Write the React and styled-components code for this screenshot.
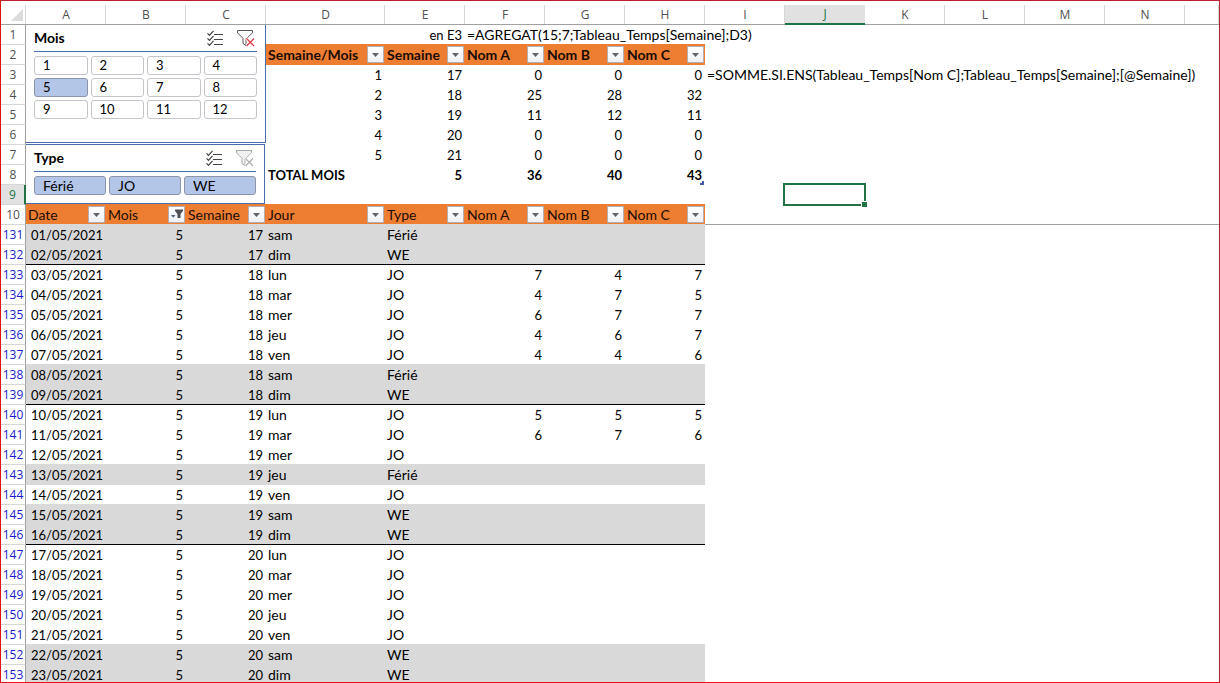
import React, { useState } from "react";
import styled, { createGlobalStyle, css } from "styled-components";

const cellFont = 'Lato, Carlito, "Liberation Sans", sans-serif';
const headingFont = '"Open Sans", "Noto Sans", sans-serif';
const color = {
  orange: "#ed7d31",
  band: "#d9d9d9",
  green: "#217346",
  line: "#a0a0a0",
  grid: "#d6d6d6",
  slicer: "#4a6ea9",
  picked: "#b4c6e7",
};

const GlobalStyle = createGlobalStyle`
  *, *::before, *::after { box-sizing: border-box; }
  body { margin: 0; background: #fff; }
`;

const Window = styled.main`
  height: 100vh;
  overflow: hidden;
  border: 1px solid #e01212;
  border-top-color: #bb2030;
  border-right-color: #bb2030;
  background: #fff;
  color: #000;
  font: 14px/18px ${cellFont};
`;

const Sheet = styled.table`
  width: 100%;
  table-layout: fixed;
  border-collapse: separate;
  border-spacing: 0;
`;

const Col = styled.col`
  width: ${(p) => (p.$w ? `${p.$w}px` : "auto")};
`;

const Row = styled.tr`
  height: 20px;
`;

const ColumnRow = styled.tr`
  height: 24px;
`;

const ColumnHead = styled.th`
  padding: 4px 0 0;
  border-bottom: 1px solid ${color.line};
  background: linear-gradient(${color.grid}, ${color.grid}) right bottom / 1px 19px no-repeat;
  font: 12px/18px ${headingFont};
  color: #505050;
  text-align: center;
  ${(p) =>
    p.$active &&
    css`
      background: linear-gradient(#fff 4px, #e1e1e1 4px);
      border-bottom: 2px solid ${color.green};
      color: ${color.green};
    `}
`;

const Corner = styled.th`
  padding: 4px 3px 0 0;
  border-bottom: 1px solid ${color.line};
  background: linear-gradient(${color.grid}, ${color.grid}) right bottom / 1px 19px no-repeat;
  text-align: right;
  line-height: 0;
`;

const RowHead = styled.th`
  padding: 1px 0 0;
  border-right: 1px solid ${color.line};
  border-bottom: 1px solid ${color.grid};
  font: 12px/18px ${headingFont};
  color: ${(p) => (p.$filtered ? "#1a1acc" : "#505050")};
  text-align: center;
  vertical-align: top;
  ${(p) =>
    p.$active &&
    css`
      background: #e1e1e1;
      border-right: 2px solid ${color.green};
      color: ${color.green};
    `}
`;

const Cell = styled.td`
  position: relative;
  padding: 1px 2px 0;
  text-align: ${(p) => (p.$num ? "right" : "left")};
  font-size: ${(p) => (p.$num || p.$bold ? 13 : 14)}px;
  font-weight: ${(p) => (p.$bold ? 700 : 400)};
  vertical-align: top;
  white-space: nowrap;
  ${(p) =>
    p.$num &&
    css`
      padding-right: 3px;
    `}
  ${(p) =>
    p.$band &&
    css`
      background: ${color.band};
      box-shadow: 0 -1px 0 ${color.band};
    `}
  ${(p) =>
    p.$weekEnd &&
    css`
      border-bottom: 1px solid #000;
    `}
`;

const FreezeCell = styled.td`
  padding: 0;
  border-bottom: 1px solid ${color.line};
`;

const FieldHead = styled.th`
  padding: 1px 1px 0 2px;
  background: ${color.orange};
  box-shadow: 0 -1px 0 ${color.orange};
  font-weight: ${(p) => (p.$bold ? 700 : 400)};
  color: #1c0d04;
  text-align: left;
  vertical-align: top;
  ${(p) =>
    p.$freeze &&
    css`
      border-bottom: 1px solid ${color.line};
    `}
`;

const FieldLine = styled.div`
  display: flex;
  align-items: flex-start;
  justify-content: space-between;
  height: 18px;
  white-space: nowrap;
`;

const FilterButton = styled.button`
  display: flex;
  flex: none;
  width: 17px;
  height: 17px;
  padding: 0;
  border: 1px solid #b5aeb0;
  background: linear-gradient(#fff, #eef1f6);
`;

const ActiveCell = styled.div`
  position: absolute;
  inset: -2px -1px -1px -2px;
  border: 2px solid ${color.green};

  &::after {
    content: "";
    position: absolute;
    right: -4px;
    bottom: -4px;
    width: 7px;
    height: 7px;
    border: 1px solid #fff;
    background: ${color.green};
  }
`;

const TableCorner = styled.svg`
  position: absolute;
  right: 1px;
  bottom: 0;
`;

const SlicerCell = styled.td`
  padding: 0;
  vertical-align: top;
`;

const SlicerStack = styled.div`
  display: flex;
  flex-direction: column;
  gap: 1px;
`;

const Slicer = styled.section`
  padding: 0 8px ${(p) => (p.$framed ? 8 : 23)}px;
  border: solid ${color.slicer};
  border-width: ${(p) => (p.$framed ? "1px 1px 1px 0" : "0 1px 1px 0")};
  margin-right: ${(p) => (p.$framed ? "1px" : "0")};
`;

const SlicerHeader = styled.header`
  display: flex;
  align-items: center;
  height: 27px;
  padding-right: 2px;
  margin-bottom: 4px;
  border-bottom: 1px solid ${color.slicer};
`;

const SlicerTitle = styled.h2`
  flex: 1;
  margin: 0;
  font-size: 14px;
  line-height: 18px;
`;

const ToolButton = styled.button`
  display: flex;
  margin-left: 13px;
  padding: 0;
  border: 0;
  background: none;
`;

const SlicerGrid = styled.div`
  display: grid;
  grid-template-columns: repeat(${(p) => p.$columns}, 1fr);
  gap: 3px;
`;

const SlicerItem = styled.button`
  height: 19px;
  padding: 0 8px;
  border: 1px solid ${(p) => (p.$on ? "#8d96a8" : "#c3c5ca")};
  border-radius: 3px;
  background: ${(p) => (p.$on ? color.picked : "#fff")};
  color: #000;
  font: ${(p) => (p.$text ? 14 : 13)}px/17px ${cellFont};
  text-align: left;
`;

const ArrowIcon = () => (
  <svg width="15" height="15" viewBox="0 0 15 15" aria-hidden="true">
    <path d="M4 6h7L7.500 10z" fill="#5f6368" />
  </svg>
);

const FilteredIcon = () => (
  <svg width="15" height="15" viewBox="0 0 15 15" aria-hidden="true">
    <path d="M6 2.500h8v1.500L11.500 7v4h-3V7L6 4z" fill="#4d5156" />
    <path d="M2 8h4.500L4.200 10.800z" fill="#4d6079" />
  </svg>
);

const MultiSelectIcon = () => (
  <svg width="17" height="17" viewBox="0 0 17 17" fill="none" stroke="#444" aria-hidden="true">
    <path d="M.5 3.300l2 2L6.500 .8M.5 8.300l2 2L6.500 5.800M.5 13.300l2 2L6.500 10.800" strokeWidth="1.200" />
    <path d="M7 4.500h9M7 9.500h9M7 14.500h9" />
  </svg>
);

const ClearFilterIcon = ({ active }) => (
  <svg width="18" height="17" viewBox="0 0 18 17" fill="none" aria-hidden="true">
    <path
      d="M10 8.200L15.500 2.800V.5H.5v2.300L6 8.300v5.200l3 2.200V8.300"
      stroke={active ? "#555" : "#a9a9a9"}
      fill={active ? "none" : "#f1f1f1"}
    />
    <path d="M9.500 8.500l7.500 7.500M17 8.500L9.500 16" stroke="#fff" strokeWidth="3" />
    <path
      d="M9.500 8.500l7.500 7.500M17 8.500L9.500 16"
      stroke={active ? "#e0394a" : "#b0b0b0"}
      strokeWidth="1.300"
    />
  </svg>
);

function Field({ label, bold, freeze, filtered }) {
  return (
    <FieldHead scope="col" $bold={bold} $freeze={freeze}>
      <FieldLine>
        {label}
        <FilterButton type="button" aria-label={`Filtrer ${label}`}>
          {filtered ? <FilteredIcon /> : <ArrowIcon />}
        </FilterButton>
      </FieldLine>
    </FieldHead>
  );
}

function SlicerPanel({ title, items, columns, initial, framed }) {
  const [selected, setSelected] = useState(initial);
  const toggle = (item) =>
    setSelected((s) => (s.includes(item) ? s.filter((x) => x !== item) : [...s, item]));
  return (
    <Slicer $framed={framed} aria-label={title}>
      <SlicerHeader>
        <SlicerTitle>{title}</SlicerTitle>
        <ToolButton type="button" aria-label="Sélection multiple">
          <MultiSelectIcon />
        </ToolButton>
        <ToolButton type="button" aria-label="Effacer le filtre" onClick={() => setSelected(items)}>
          <ClearFilterIcon active={selected.length < items.length} />
        </ToolButton>
      </SlicerHeader>
      <SlicerGrid $columns={columns}>
        {items.map((item) => (
          <SlicerItem
            key={item}
            type="button"
            $on={selected.includes(item)}
            $text={isNaN(item)}
            aria-pressed={selected.includes(item)}
            onClick={() => toggle(item)}
          >
            {item}
          </SlicerItem>
        ))}
      </SlicerGrid>
    </Slicer>
  );
}

const letters = "ABCDEFGHIJKLMN".split("");
const months = ["1", "2", "3", "4", "5", "6", "7", "8", "9", "10", "11", "12"];
const dayTypes = ["Férié", "JO", "WE"];

const weeks = [
  [1, 17, 0, 0, 0],
  [2, 18, 25, 28, 32],
  [3, 19, 11, 12, 11],
  [4, 20, 0, 0, 0],
  [5, 21, 0, 0, 0],
];

const days = [
  ["01", 17, "sam", "Férié"],
  ["02", 17, "dim", "WE"],
  ["03", 18, "lun", "JO", 7, 4, 7],
  ["04", 18, "mar", "JO", 4, 7, 5],
  ["05", 18, "mer", "JO", 6, 7, 7],
  ["06", 18, "jeu", "JO", 4, 6, 7],
  ["07", 18, "ven", "JO", 4, 4, 6],
  ["08", 18, "sam", "Férié"],
  ["09", 18, "dim", "WE"],
  ["10", 19, "lun", "JO", 5, 5, 5],
  ["11", 19, "mar", "JO", 6, 7, 6],
  ["12", 19, "mer", "JO"],
  ["13", 19, "jeu", "Férié"],
  ["14", 19, "ven", "JO"],
  ["15", 19, "sam", "WE"],
  ["16", 19, "dim", "WE"],
  ["17", 20, "lun", "JO"],
  ["18", 20, "mar", "JO"],
  ["19", 20, "mer", "JO"],
  ["20", 20, "jeu", "JO"],
  ["21", 20, "ven", "JO"],
  ["22", 20, "sam", "WE"],
  ["23", 20, "dim", "WE"],
];

function DayRow({ number, day }) {
  const [date, week, name, type, a, b, c] = day;
  const look = { $band: type !== "JO", $weekEnd: name === "dim" };
  return (
    <Row>
      <RowHead scope="row" $filtered>{number}</RowHead>
      <Cell $num {...look}>{date}/05/2021</Cell>
      <Cell $num {...look}>5</Cell>
      <Cell $num {...look}>{week}</Cell>
      <Cell {...look}>{name}</Cell>
      <Cell {...look}>{type}</Cell>
      <Cell $num {...look}>{a}</Cell>
      <Cell $num {...look}>{b}</Cell>
      <Cell $num {...look}>{c}</Cell>
      <Cell colSpan={7} />
    </Row>
  );
}

export default function App() {
  return (
    <>
      <GlobalStyle />
      <Window>
        <Sheet>
          <colgroup>
            <Col $w={25} />
            {letters.map((l) => (
              <Col key={l} $w={l === "D" ? 119 : 80} />
            ))}
            <Col />
          </colgroup>
          <thead>
            <ColumnRow>
              <Corner aria-label="Tout sélectionner">
                <svg width="12" height="12" viewBox="0 0 12 12" aria-hidden="true">
                  <path d="M12 0v12H0z" fill="#dcdcdc" />
                </svg>
              </Corner>
              {letters.map((l) => (
                <ColumnHead key={l} scope="col" $active={l === "J"}>{l}</ColumnHead>
              ))}
              <ColumnHead aria-hidden="true" />
            </ColumnRow>
          </thead>
          <tbody>
            <Row>
              <RowHead scope="row">1</RowHead>
              <SlicerCell colSpan={3} rowSpan={9}>
                <SlicerStack>
                  <SlicerPanel title="Mois" items={months} columns={4} initial={["5"]} />
                  <SlicerPanel title="Type" items={dayTypes} columns={3} initial={dayTypes} framed />
                </SlicerStack>
              </SlicerCell>
              <Cell />
              <Cell $num>en E3</Cell>
              <Cell colSpan={10}>=AGREGAT(15;7;Tableau_Temps[Semaine];D3)</Cell>
            </Row>
            <Row>
              <RowHead scope="row">2</RowHead>
              {["Semaine/Mois", "Semaine", "Nom A", "Nom B", "Nom C"].map((label) => (
                <Field key={label} label={label} bold />
              ))}
              <Cell colSpan={7} />
            </Row>
            {weeks.map((values, i) => (
              <Row key={values[0]}>
                <RowHead scope="row">{i + 3}</RowHead>
                {values.map((v, j) => (
                  <Cell key={j} $num>{v}</Cell>
                ))}
                <Cell colSpan={7}>
                  {i === 0 && "=SOMME.SI.ENS(Tableau_Temps[Nom C];Tableau_Temps[Semaine];[@Semaine])"}
                </Cell>
              </Row>
            ))}
            <Row>
              <RowHead scope="row">8</RowHead>
              <Cell $bold>TOTAL MOIS</Cell>
              <Cell $num $bold>5</Cell>
              <Cell $num $bold>36</Cell>
              <Cell $num $bold>40</Cell>
              <Cell $num $bold>
                43
                <TableCorner width="4" height="4" viewBox="0 0 4 4" aria-hidden="true">
                  <path d="M2 0h2v4H0V2h2z" fill="#4a55a8" />
                </TableCorner>
              </Cell>
              <Cell colSpan={7} />
            </Row>
            <Row>
              <RowHead scope="row" $active>9</RowHead>
              <Cell colSpan={5} />
              <Cell />
              <Cell>
                <ActiveCell />
              </Cell>
              <Cell colSpan={5} />
            </Row>
            <Row>
              <RowHead scope="row">10</RowHead>
              {["Date", "Mois", "Semaine", "Jour", "Type", "Nom A", "Nom B", "Nom C"].map((label) => (
                <Field key={label} label={label} freeze filtered={label === "Mois"} />
              ))}
              <FreezeCell colSpan={7} />
            </Row>
            {days.map((day, i) => (
              <DayRow key={day[0]} number={131 + i} day={day} />
            ))}
          </tbody>
        </Sheet>
      </Window>
    </>
  );
}
